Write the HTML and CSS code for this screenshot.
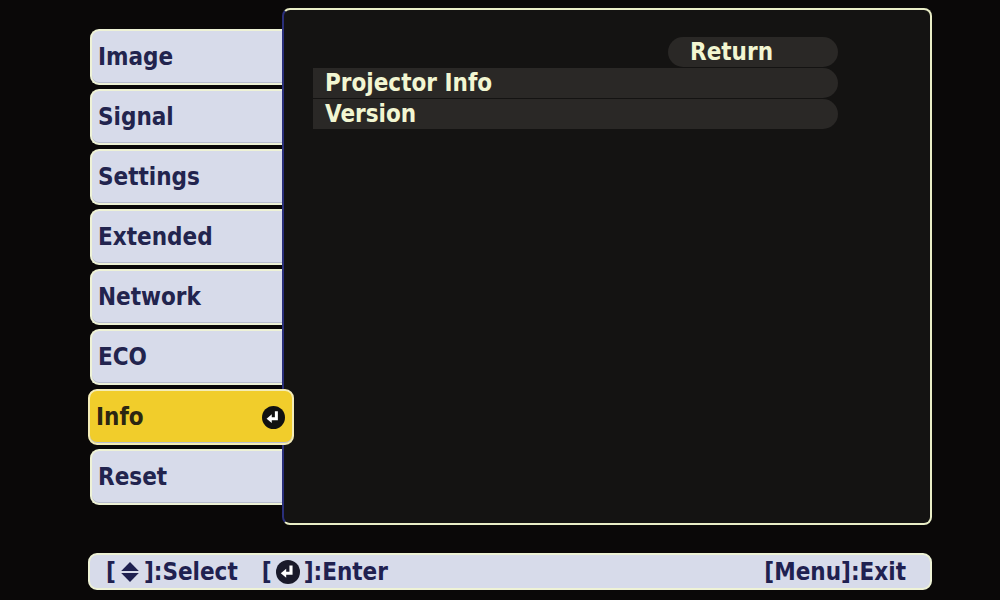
FILE: index.html
```html
<!DOCTYPE html>
<html>
<head>
    <title>Projector Menu - Info</title>
    <link rel="stylesheet" href="styles.css">
</head>
<body>
    <div class="screen">
        <div class="menu">
            <ul class="tabs">
                <li class="tab">Image</li>
                <li class="tab">Signal</li>
                <li class="tab">Settings</li>
                <li class="tab">Extended</li>
                <li class="tab">Network</li>
                <li class="tab">ECO</li>
                <li class="tab active">
                    <span>Info</span>
                    <svg class="enter-icon" width="23" height="23" viewBox="0 0 20 20">
                        <circle cx="10" cy="10" r="10" fill="#111"/>
                        <path d="M12.5 4.5 V11 H7.5" fill="none" stroke="#fff" stroke-width="2.6"/>
                        <path d="M4 11 L8.5 7.2 V14.8 Z" fill="#fff"/>
                    </svg>
                </li>
                <li class="tab">Reset</li>
            </ul>
            <div class="panel">
                <div class="row return"><span>Return</span></div>
                <div class="row">Projector Info</div>
                <div class="row">Version</div>
            </div>
        </div>
        <div class="footer">
            <span class="hint">[<svg class="updown" width="20" height="22" viewBox="0 0 18 20">
                <path d="M9 1 L17 9 H1 Z" fill="#1f2150"/>
                <path d="M9 19 L17 11 H1 Z" fill="#1f2150"/>
            </svg>]:Select</span>
            <span class="hint">[<svg class="enter-small" width="24" height="24" viewBox="0 0 20 20">
                <circle cx="10" cy="10" r="10" fill="#1a1a2a"/>
                <path d="M12.5 4.5 V11 H7.5" fill="none" stroke="#fff" stroke-width="2.6"/>
                <path d="M4 11 L8.5 7.2 V14.8 Z" fill="#fff"/>
            </svg>]:Enter</span>
            <span class="hint exit">[Menu]:Exit</span>
        </div>
    </div>
</body>
</html>
```

FILE: styles.css
```css
body {
    margin: 0;
    background: #0a0808;
    font-family: "DejaVu Sans Condensed", "DejaVu Sans", Verdana, sans-serif;
    font-stretch: condensed;
    font-weight: bold;
}
.screen {
    width: 1000px;
    height: 600px;
    padding: 8px 68px 0 88px;
    box-sizing: border-box;
}
.menu {
    display: flex;
    height: 517px;
}
.tabs {
    list-style: none;
    margin: 0;
    padding: 21px 0 0 2px;
    width: 192px;
    display: flex;
    flex-direction: column;
    gap: 4px;
    position: relative;
    z-index: 2;
}
.tab {
    height: 52px;
    display: flex;
    align-items: center;
    justify-content: space-between;
    padding: 0 12px 0 6px;
    background: #d7dbea;
    color: #22244e;
    font-size: 24px;
    border: 2px solid #eef2d6;
    border-right: none;
    border-radius: 9px 0 0 9px;
    box-shadow: inset 0 -1px 0 #b9bdd0;
}
.tab.active {
    background: #f1cd2b;
    color: #2b2612;
    border: 2px solid #f4ecb6;
    border-radius: 9px;
    margin: 0 -12px 0 -2px;
    padding-left: 6px;
    padding-right: 7px;
}
.enter-icon {
    display: block;
}
.panel {
    flex: 1;
    background: #141312;
    border: 2px solid #e9edc6;
    border-left: 2px solid #2a2f7a;
    border-radius: 8px;
    padding: 27px 92px 0 29px;
    display: flex;
    flex-direction: column;
    gap: 1px;
}
.row {
    height: 30px;
    line-height: 30px;
    padding-left: 12px;
    background: #2a2826;
    color: #f2f6d2;
    font-size: 24px;
    border-radius: 0 15px 15px 0;
}
.row.return {
    align-self: flex-end;
    width: 170px;
    padding-left: 22px;
    border-radius: 15px;
    box-sizing: border-box;
}
.footer {
    margin-top: 28px;
    height: 33px;
    display: flex;
    align-items: center;
    gap: 24px;
    padding: 0 24px 0 16px;
    background: #d7dbea;
    border: 2px solid #eef2d6;
    border-radius: 9px;
    color: #1f2150;
    font-size: 24px;
}
.hint {
    display: flex;
    align-items: center;
}
.hint svg {
    margin: 0 4px;
}
.exit {
    margin-left: auto;
}
```
